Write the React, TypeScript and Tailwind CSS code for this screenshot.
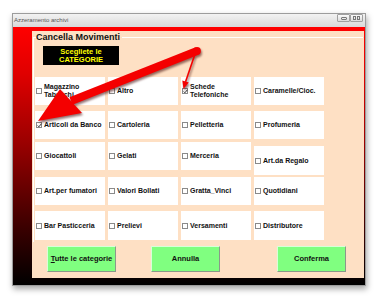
const cells: { label: string[]; checked?: boolean }[][] = [
  [
    { label: ["Magazzino", "Tabacchi"] },
    { label: ["Altro"] },
    { label: ["Schede", "Telefoniche"], checked: true },
    { label: ["Caramelle/Cioc."] },
  ],
  [
    { label: ["Articoli da Banco"], checked: true },
    { label: ["Cartoleria"] },
    { label: ["Pelletteria"] },
    { label: ["Profumeria"] },
  ],
  [
    { label: ["Giocattoli"] },
    { label: ["Gelati"] },
    { label: ["Merceria"] },
    { label: ["Art.da Regalo"] },
  ],
  [
    { label: ["Art.per fumatori"] },
    { label: ["Valori Bollati"] },
    { label: ["Gratta_Vinci"] },
    { label: ["Quotidiani"] },
  ],
  [
    { label: ["Bar Pasticceria"] },
    { label: ["Prelievi"] },
    { label: ["Versamenti"] },
    { label: ["Distributore"] },
  ],
];

// vertical gap before each row, and row height (rows are a bit uneven in the original)
const rowMargins = ["mt-0", "mt-[6px]", "mt-[3px]", "mt-[2px]", "mt-[6px]"];
const rowHeights = ["h-[28px]", "h-[28px]", "h-[33px]", "h-[28px]", "h-[29px]"];

function Checkbox({ checked }: { checked?: boolean }) {
  return (
    <span className="ml-[1px] mr-[2px] grid h-[6px] w-[6px] shrink-0 place-items-center border border-[#8a8a8a] bg-white">
      {checked && (
        <svg viewBox="0 0 6 6" className="h-[5px] w-[5px]">
          <path d="M0.8 3 L2.3 4.5 L5.2 1" fill="none" stroke="#222" strokeWidth="1.1" />
        </svg>
      )}
    </span>
  );
}

function Cell({ label, checked, className }: { label: string[]; checked?: boolean; className?: string }) {
  return (
    <div className={`flex items-center bg-white ${className ?? ""}`}>
      <Checkbox checked={checked} />
      <span className="text-[7px] font-bold leading-[8px] text-[#111]">
        {label.map((l) => (
          <span key={l} className="block">
            {l}
          </span>
        ))}
      </span>
    </div>
  );
}

function GreenButton({ children, className }: { children: React.ReactNode; className?: string }) {
  return (
    <button
      className={`h-[26px] w-[69px] border border-t-[#d8ffd8] border-l-[#d8ffd8] border-r-[#8a9a8a] border-b-[#8a9a8a] bg-[#80ff80] text-[7.5px] font-bold text-[#111] ${className ?? ""}`}
    >
      {children}
    </button>
  );
}

export default function App() {
  return (
    <div className="relative h-[299px] w-[378px] overflow-hidden bg-white font-['Liberation_Sans',Arial,sans-serif]">
      {/* window */}
      <div className="ml-[12px] mt-[13px] flex h-[273px] w-[354px] flex-col border border-[#9c9c9c] shadow-[1px_3px_6px_rgba(0,0,0,0.35)]">
        {/* title bar */}
        <div className="flex h-[13px] shrink-0 items-start justify-between bg-[linear-gradient(to_bottom,#f2f2f2,#d9d9d9)] pr-[2px]">
          <span className="pl-[1px] pt-[3px] text-[6px] leading-[7px] text-[#555]">Azzeramento archivi</span>
          <div className="flex">
            <span className="grid h-[8px] w-[13px] place-items-center rounded-[1px] border border-[#a0a0a0] bg-[linear-gradient(to_bottom,#fafafa,#dcdcdc)]">
              <span className="h-[3px] w-[6px] rounded-[1px] border border-[#777]" />
            </span>
            <span className="grid h-[8px] w-[13px] place-items-center rounded-[1px] border border-[#a0a0a0] bg-[linear-gradient(to_bottom,#fafafa,#dcdcdc)]">
              <span className="flex gap-[1px]">
                <span className="h-[4px] w-[3px] border border-[#777]" />
                <span className="h-[4px] w-[3px] border border-[#777]" />
              </span>
            </span>
          </div>
        </div>

        {/* body */}
        <div className="flex-1 bg-[linear-gradient(to_bottom,#ff0000_0%,#e00000_18%,#9a0000_45%,#3a0000_78%,#000000_100%)] pb-[7px] pl-[19px] pr-[1px] pt-[4px]">
          <div className="flex h-full flex-col bg-[#fee0c4]">
            {/* group box */}
            <div className="relative ml-[1px] mr-[1px] mt-[6px] border-l border-t border-white pb-[2px]">
              <span className="absolute left-[2px] top-[-6px] bg-[#fee0c4] pr-[2px] text-[9px] font-bold leading-[10px] text-[#111]">
                Cancella Movimenti
              </span>

              <div className="ml-[9px] mt-[8px] flex h-[19px] w-[76px] flex-col items-center justify-center bg-black text-[7.5px] font-bold leading-[8px] text-[#ffff00]">
                <span>Scegliete le</span>
                <span>CATEGORIE</span>
              </div>

              <div className="ml-[1px] mt-[12px]">
                {cells.map((row, r) => (
                  <div key={r} className={`grid grid-cols-[70px_70px_70px_70px] gap-x-[3px] ${rowMargins[r]} ${rowHeights[r]}`}>
                    {row.map((c, i) => (
                      <Cell
                        key={c.label.join(" ")}
                        label={c.label}
                        checked={c.checked}
                        className={r === 2 ? (i === 3 ? "h-[29px] self-end" : "h-[28px] self-start") : ""}
                      />
                    ))}
                  </div>
                ))}
              </div>
            </div>

            {/* buttons */}
            <div className="ml-[15px] mt-[4px] flex">
              <GreenButton>
                <span className="underline">T</span>utte le categorie
              </GreenButton>
              <GreenButton className="ml-[35px]">Annulla</GreenButton>
              <GreenButton className="ml-[57px]">Conferma</GreenButton>
            </div>
          </div>
        </div>
      </div>

      {/* red arrows drawn over the form */}
      <svg
        viewBox="0 0 378 299"
        className="pointer-events-none absolute left-0 top-0 h-[299px] w-[378px] drop-shadow-[1px_2px_1px_rgba(60,0,0,0.55)]"
      >
        <polygon points="38,121 60,89 82,113" fill="#f40000" />
        <polygon points="69.5,97.3 195.5,47.3 198.5,54.7 72.5,104.7" fill="#f40000" />
        <circle cx="197" cy="51" r="3.9" fill="#f40000" />
        <line x1="195" y1="54" x2="185.5" y2="82" stroke="#f40000" strokeWidth="1.6" />
        <polygon points="183.5,89 182.3,80.5 188.8,82.5" fill="#f40000" />
      </svg>
    </div>
  );
}
